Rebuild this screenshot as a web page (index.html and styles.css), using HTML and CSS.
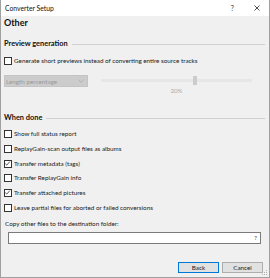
FILE: index.html
```html
<!DOCTYPE html>
<html>
<head>
<meta charset="utf-8">
<link rel="stylesheet" href="styles.css">
</head>
<body>
<div class="window">
  <div class="titlebar">
    <span class="title">Converter Setup</span>
    <span class="help">?</span>
    <svg class="close" width="6" height="6" viewBox="0 0 6 6"><path d="M0.5 0.5L5.5 5.5M5.5 0.5L0.5 5.5" stroke="#222" stroke-width="0.8"/></svg>
  </div>
  <div class="body">
    <div class="page-title">Other</div>

    <div class="group-head"><span>Preview generation</span><i class="rule"></i></div>
    <div class="check first"><span class="box"></span><span>Generate short previews instead of converting entire source tracks</span></div>
    <div class="preview-row">
      <div class="combo"><span>Length percentage</span>
        <svg width="6" height="4" viewBox="0 0 6 4"><path d="M0.5 0.8L3 3.2L5.5 0.8" fill="none" stroke="#aaa" stroke-width="0.8"/></svg>
      </div>
      <div class="slider">
        <div class="track"><span class="thumb"></span></div>
        <div class="pct">20%</div>
      </div>
    </div>

    <div class="group-head done"><span>When done</span><i class="rule"></i></div>
    <div class="checks">
      <div class="check"><span class="box"></span><span>Show full status report</span></div>
      <div class="check"><span class="box"></span><span>ReplayGain-scan output files as albums</span></div>
      <div class="check"><span class="box on"><svg width="7" height="7" viewBox="0 0 7 7"><path d="M1.2 3.6L2.8 5.1L5.8 1.6" fill="none" stroke="#333" stroke-width="0.8"/></svg></span><span>Transfer metadata (tags)</span></div>
      <div class="check"><span class="box"></span><span>Transfer ReplayGain info</span></div>
      <div class="check"><span class="box on"><svg width="7" height="7" viewBox="0 0 7 7"><path d="M1.2 3.6L2.8 5.1L5.8 1.6" fill="none" stroke="#333" stroke-width="0.8"/></svg></span><span>Transfer attached pictures</span></div>
      <div class="check"><span class="box"></span><span>Leave partial files for aborted or failed conversions</span></div>
    </div>

    <div class="copy-label">Copy other files to the destination folder:</div>
    <div class="textbox"><span class="q">?</span></div>

    <div class="buttons">
      <div class="btn default">Back</div>
      <div class="btn">Cancel</div>
    </div>
    <svg class="grip" width="6" height="6" viewBox="0 0 6 6" fill="#b0b0b0">
      <rect x="4" y="0" width="1" height="1"/><rect x="2" y="2" width="1" height="1"/><rect x="4" y="2" width="1" height="1"/>
      <rect x="0" y="4" width="1" height="1"/><rect x="2" y="4" width="1" height="1"/><rect x="4" y="4" width="1" height="1"/>
    </svg>
  </div>
</div>
</body>
</html>
```

FILE: styles.css
```css
html, body {
  margin: 0;
  padding: 0;
  background: #f0f0f0;
}
.window {
  width: 270px;
  height: 278px;
  box-sizing: border-box;
  border: 1px solid #a0a0a0;
  border-top: 0;
  display: flex;
  flex-direction: column;
  font-family: Lato, "Noto Sans", sans-serif;
  font-size: 6.3px;
  color: #1a1a1a;
  background: #f0f0f0;
}
.titlebar {
  height: 16px;
  background: #fff;
  display: flex;
  align-items: center;
  padding-left: 4px;
  padding-right: 9px;
  flex: none;
}
.title {
  font-size: 6.8px;
  flex: 1;
  color: #111;
}
.help {
  font-size: 7px;
  color: #333;
  margin-right: 20px;
}
.close { display: block; }
.body {
  flex: 1;
  padding: 0 4px 0 3px;
  display: flex;
  flex-direction: column;
  position: relative;
}
.page-title {
  font-weight: bold;
  font-size: 9px;
  line-height: 10px;
  margin-top: 2px;
  color: #111;
}
.group-head {
  display: flex;
  align-items: center;
  gap: 4px;
  font-weight: bold;
  font-size: 7.4px;
  line-height: 10px;
  height: 10px;
  margin-top: 11px;
  color: #111;
}
.group-head.done { margin-top: 18px; }
.rule {
  flex: 1;
  height: 1px;
  background: #d0d0d0;
}
.check {
  display: flex;
  align-items: center;
  gap: 2px;
  height: 10px;
  line-height: 10px;
}
.check.first { margin-top: 7px; }
.box {
  width: 6px;
  height: 6px;
  border: 1px solid #333;
  background: #fff;
  flex: none;
  position: relative;
}
.box svg {
  position: absolute;
  left: -1px;
  top: -1px;
}
.preview-row {
  display: flex;
  align-items: flex-start;
  margin-top: 9px;
}
.combo {
  flex: none;
  width: 84px;
  height: 12px;
  box-sizing: border-box;
  background: #cccccc;
  border: 1px solid #c4c4c4;
  color: #9a9a9a;
  display: flex;
  align-items: center;
  justify-content: space-between;
  padding: 0 3px 0 1px;
}
.combo svg { display: block; }
.slider {
  flex: none;
  margin-left: 13px;
  width: 151px;
  display: flex;
  flex-direction: column;
  align-items: center;
}
.track {
  margin-top: 4px;
  width: 151px;
  height: 3px;
  background: #e6e6e6;
  position: relative;
}
.thumb {
  position: absolute;
  left: 92px;
  top: -3px;
  width: 4px;
  height: 9px;
  background: #cccccc;
}
.pct {
  margin-top: 5px;
  color: #ababab;
  font-size: 6.2px;
  line-height: 8px;
}
.checks {
  margin-top: 6px;
  display: flex;
  flex-direction: column;
  gap: 4.75px;
}
.copy-label {
  margin-top: 6px;
  line-height: 10px;
  height: 10px;
  padding-left: 1px;
}
.textbox {
  margin: 3px 4px 0 4px;
  height: 12px;
  box-sizing: border-box;
  border: 1px solid #7a7a7a;
  background: #fff;
  display: flex;
  align-items: center;
  justify-content: flex-end;
  padding-right: 3px;
}
.q { font-size: 6px; color: #333; }
.buttons {
  display: flex;
  justify-content: flex-end;
  gap: 3px;
  margin-top: 18px;
  padding-right: 2px;
}
.btn {
  width: 41px;
  height: 11px;
  box-sizing: border-box;
  background: #e1e1e1;
  border: 1px solid #adadad;
  display: flex;
  align-items: center;
  justify-content: center;
  font-size: 6.3px;
}
.btn.default { border-color: #0078d7; }
.grip {
  position: absolute;
  right: 1px;
  bottom: 1px;
}
```
